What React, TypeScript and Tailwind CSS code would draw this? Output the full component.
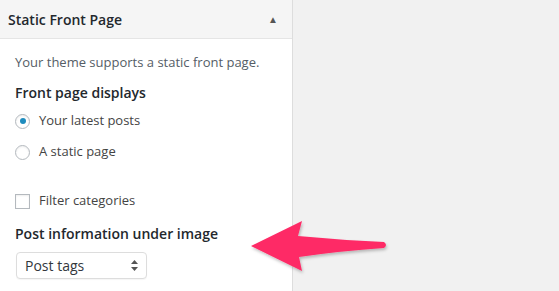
import { useState } from 'react'

const font = { fontFamily: '"Open Sans", "Liberation Sans", sans-serif' }

const Arrow = () => (
  <svg
    className="absolute left-[240px] top-[210px] pointer-events-none"
    width="160"
    height="70"
    viewBox="240 210 160 70"
  >
    <defs>
      <filter id="sh" x="-20%" y="-40%" width="140%" height="180%">
        <feDropShadow dx="1" dy="2" stdDeviation="1.5" floodColor="#000" floodOpacity="0.25" />
      </filter>
    </defs>
    <path
      d="M251 246 L302 221 L298 236 Q340 240 384 242 Q388 245 384 248 Q340 251 299 257 L302 271 Z"
      fill="#fe2a66"
      filter="url(#sh)"
    />
  </svg>
)

export default function App() {
  const [mode, setMode] = useState('posts')
  const [filter, setFilter] = useState(false)

  return (
    <div className="relative flex w-[559px] h-[291px] bg-[#f1f1f1] overflow-hidden" style={font}>
      <div className="w-[293px] h-full bg-white border-r border-[#dddddd] flex flex-col">
        <div className="h-[39px] bg-[#f5f5f5] border-b border-[#e5e5e5] flex items-center justify-between pl-[8px] pr-[14px]">
          <span className="text-[14px] font-semibold text-[#23282d]">Static Front Page</span>
          <span className="text-[10px] text-[#555] leading-none">▲</span>
        </div>
        <div className="pl-[15px] pt-[13px] text-[13px] text-[#555d66]">
          <p className="leading-[20px]">Your theme supports a static front page.</p>
          <p className="mt-[11px] text-[14px] font-semibold text-[#23282d] leading-[20px]">Front page displays</p>
          <div className="mt-[8px] flex flex-col gap-[11px]">
            {[
              ['posts', 'Your latest posts'],
              ['page', 'A static page'],
            ].map(([k, label]) => (
              <label key={k} className="flex items-center gap-[9px] h-[20px] text-[#444]">
                <span
                  onClick={() => setMode(k)}
                  className="w-[15px] h-[15px] rounded-full border border-[#b4b9be] bg-white shadow-[inset_0_1px_2px_rgba(0,0,0,0.07)] flex items-center justify-center"
                >
                  {mode === k && <span className="w-[6px] h-[6px] rounded-full bg-[#1e8cbe]" />}
                </span>
                <span className="text-[13px]">{label}</span>
              </label>
            ))}
          </div>
          <label className="mt-[29px] flex items-center gap-[9px] h-[20px] text-[#444]">
            <span
              onClick={() => setFilter(!filter)}
              className="w-[15px] h-[15px] border border-[#b4b9be] bg-white shadow-[inset_0_1px_2px_rgba(0,0,0,0.07)]"
            />
            <span className="text-[13px]">Filter categories</span>
          </label>
          <p className="mt-[13px] text-[14px] font-semibold text-[#23282d] leading-[20px]">Post information under image</p>
          <div className="mt-[8px] ml-[1px] w-[131px] h-[27px] border border-[#dddddd] rounded-[4px] bg-white flex items-center justify-between pl-[8px] pr-[8px] shadow-[0_1px_1px_rgba(0,0,0,0.04)]">
            <span className="text-[14px] text-[#32373c]">Post tags</span>
            <svg width="7" height="11" viewBox="0 0 7 11">
              <path d="M3.5 0 L7 4 L0 4 Z M0 7 L7 7 L3.5 11 Z" fill="#555" />
            </svg>
          </div>
        </div>
      </div>
      <Arrow />
    </div>
  )
}
